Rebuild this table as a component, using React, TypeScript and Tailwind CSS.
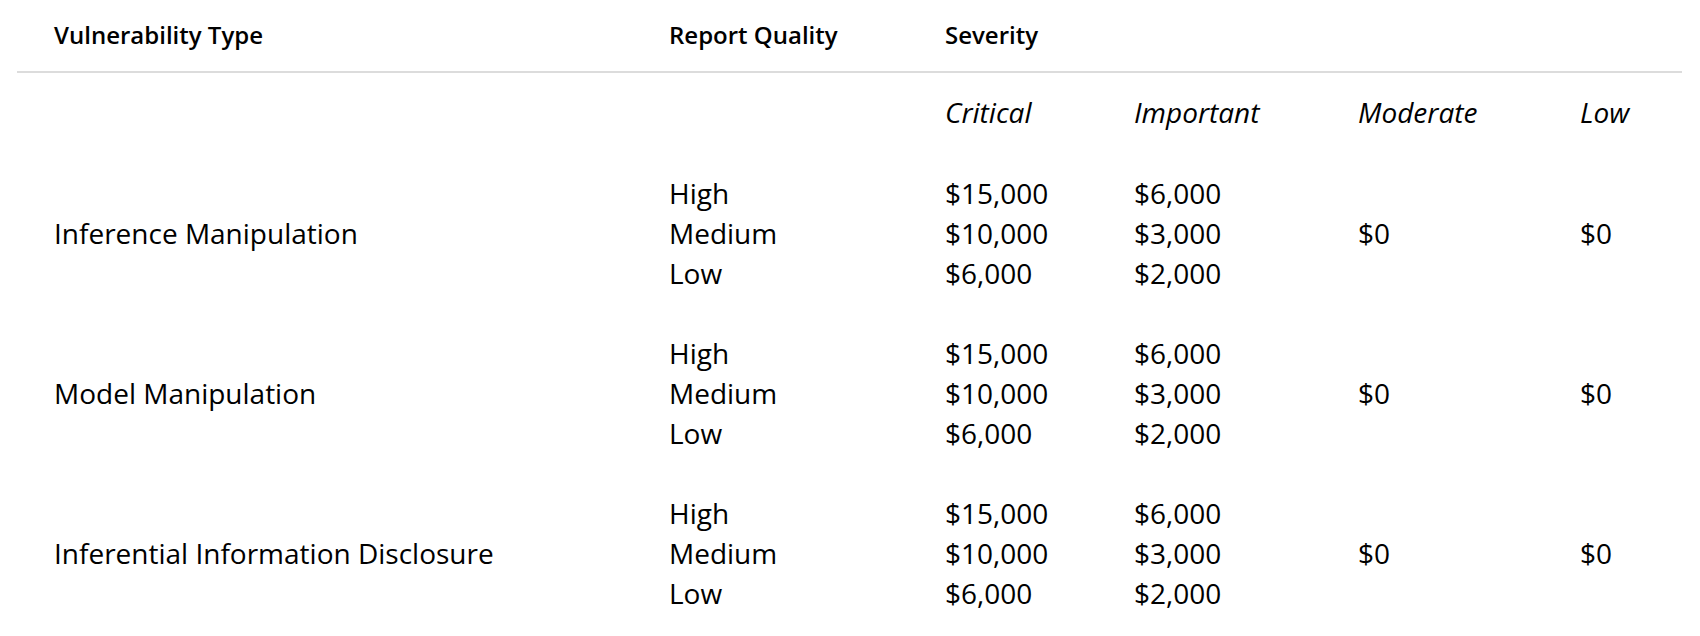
import React from "react"

const groups = [
  { name: "Inference Manipulation" },
  { name: "Model Manipulation" },
  { name: "Inferential Information Disclosure" },
]

const qualities = ["High", "Medium", "Low"]
const critical = ["$15,000", "$10,000", "$6,000"]
const important = ["$6,000", "$3,000", "$2,000"]

const cols = "grid grid-cols-[615px_276px_189px_224px_222px_1fr]"

export default function App() {
  return (
    <div className="w-[1700px] h-[636px] bg-white text-black overflow-hidden" style={{ fontFamily: '"Open Sans", "Noto Sans", sans-serif' }}>
      <div className="ml-[17px] w-[1665px]">
        {/* Header */}
        <div className="h-[73px] border-b-2 border-[#dcdcdc] pl-[37px]">
          <div className={`${cols} h-[71px] pb-[2px] items-center text-[24px] font-semibold`}>
            <div>Vulnerability Type</div>
            <div>Report Quality</div>
            <div>Severity</div>
          </div>
        </div>

        <div className="pl-[37px]">
          {/* Severity labels */}
          <div className={`${cols} pt-[19px] leading-[40px] text-[28px] italic`}>
            <div />
            <div />
            <div>Critical</div>
            <div>Important</div>
            <div>Moderate</div>
            <div>Low</div>
          </div>

          {/* Rows */}
          <div className="pt-[41px] flex flex-col gap-[40px] text-[28px] leading-[40px]">
            {groups.map((g) => (
              <div key={g.name} className={`${cols} items-center`}>
                <div>{g.name}</div>
                <div>
                  {qualities.map((q) => (
                    <div key={q}>{q}</div>
                  ))}
                </div>
                <div>
                  {critical.map((v) => (
                    <div key={v}>{v}</div>
                  ))}
                </div>
                <div>
                  {important.map((v) => (
                    <div key={v}>{v}</div>
                  ))}
                </div>
                <div>$0</div>
                <div>$0</div>
              </div>
            ))}
          </div>
        </div>
      </div>
    </div>
  )
}
